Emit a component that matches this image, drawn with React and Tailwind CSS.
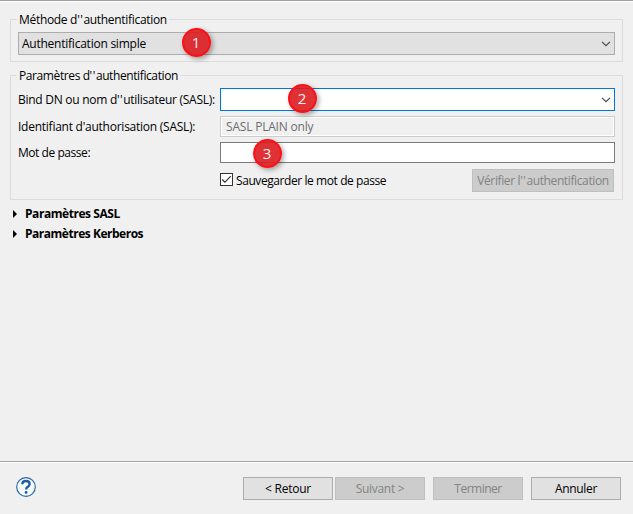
import React from 'react';

function Chevron() {
  return (
    <svg className="h-[6px] w-[10px]" viewBox="0 0 10 6" fill="none">
      <path d="M1 .9 5 4.7 9 .9" stroke="#4c4c4c" strokeWidth="1.25" />
    </svg>
  );
}

function Marker({ children, className }) {
  return (
    <span
      className={`absolute flex h-[29px] w-[29px] items-center justify-center rounded-full border-2 border-[#fb1015] bg-[#da1c21]/90 pb-px pr-px font-['Open_Sans',sans-serif] text-[15px] leading-none font-medium text-[#fdeeee] shadow-[2px_2px_5px_rgba(0,0,0,0.35)] ${className}`}
    >
      {children}
    </span>
  );
}

// Doubled apostrophe, kept visibly apart from each other.
function Quotes() {
  return <span className="tracking-[0.5px]">''</span>;
}

function Group({ title, titleClass, className, children }) {
  return (
    <section className={`relative border border-[#dcdcdc] ${className}`}>
      <h2 className={`absolute -top-[8px] left-[6px] bg-[#f0f0f0] px-[2px] leading-4 ${titleClass}`}>{title}</h2>
      {children}
    </section>
  );
}

function Button({ children, disabled, className }) {
  return (
    <button
      disabled={disabled}
      className={`flex h-[23px] shrink-0 items-center justify-center border ${
        disabled ? 'border-[#bfbfbf] bg-[#cccccc] text-[#838383]' : 'border-[#adadad] bg-[#e1e1e1] text-black'
      } ${className}`}
    >
      <span>{children}</span>
    </button>
  );
}

function Expander({ children, className }) {
  return (
    <div className="flex h-5 items-center">
      <svg className="mr-[8px] h-[8px] w-[4px]" viewBox="0 0 4 8">
        <path d="M0 0 4 4 0 8Z" fill="#000" />
      </svg>
      <span className={`font-bold ${className}`}>{children}</span>
    </div>
  );
}

export default function App() {
  return (
    <div className="flex h-[514px] w-[633px] flex-col overflow-hidden whitespace-nowrap bg-[#f0f0f0] font-['Open_Sans','Noto_Sans',sans-serif] text-[12px] leading-4 text-black">
      <div className="h-[2px] shrink-0 border-b border-t border-b-white border-t-[#a0a0a0]" />
      <main className="flex h-[459px] shrink-0 flex-col px-[10px] pt-[17px]">
        <Group title={<>Méthode d<Quotes />authentification</>} titleClass="tracking-[-0.31px]" className="h-[43px] px-[7px] pt-[12px]">
          <div className="relative flex h-[23px] items-center justify-between border border-[#adadad] bg-[#e1e1e1] pl-[3px] pr-[3px]">
            <span className="tracking-[-0.24px]">Authentification simple</span>
            <Chevron />
            <Marker className="left-[163px] top-[-5px]">1</Marker>
          </div>
        </Group>
        <Group title={<>Paramètres d<Quotes />authentification</>} titleClass="tracking-[-0.4px]" className="mt-[13px] h-[125px] px-[7px] pt-[12px]">
          <div className="flex h-[23px] items-center">
            <label className="w-[202px] shrink-0 tracking-[-0.27px]">Bind DN ou nom d<Quotes />utilisateur (SASL):</label>
            <div className="relative flex h-[23px] grow items-center justify-end border border-[#0078d7] bg-white pr-[3px]">
              <Chevron />
              <Marker className="left-[67px] top-[-5px]">2</Marker>
            </div>
          </div>
          <div className="mt-[5px] flex h-[21px] items-center">
            <label className="w-[202px] shrink-0 tracking-[-0.25px]">Identifiant d'authorisation (SASL):</label>
            <div className="flex h-[21px] grow items-center border border-[#cccccc] bg-[#f0f0f0] pl-[5px] text-[#6d6d6d] shadow-[inset_0_0_0_1px_white]">
              <span className="tracking-[-0.2px]">SASL PLAIN only</span>
            </div>
          </div>
          <div className="mt-[5px] flex h-[21px] items-center">
            <label className="w-[202px] shrink-0 tracking-[-0.45px]">Mot de passe:</label>
            <div className="relative h-[21px] grow border border-[#7a7a7a] bg-white">
              <Marker className="left-[32px] top-[-4px]">3</Marker>
            </div>
          </div>
          <div className="mt-[6px] flex h-[23px] items-center justify-between pl-[202px] pr-px">
            <label className="flex items-center">
              <span className="mr-[3px] -mt-[2px] flex h-[13px] w-[13px] items-center justify-center border border-[#333] bg-white">
                <svg className="h-[11px] w-[11px]" viewBox="0 0 11 11" fill="none">
                  <path d="m1.2 5.5 2.7 2.7 5.9-6" stroke="#333" strokeWidth="1.1" />
                </svg>
              </span>
              <span className="tracking-[-0.42px]">Sauvegarder le mot de passe</span>
            </label>
            <Button disabled className="w-[142px] tracking-[-0.38px]">Vérifier l<Quotes />authentification</Button>
          </div>
        </Group>
        <div className="mt-[4px] pl-[3px]">
          <Expander className="tracking-[-0.45px]">Paramètres SASL</Expander>
          <Expander className="tracking-[-0.48px]">Paramètres Kerberos</Expander>
        </div>
      </main>
      <footer className="flex h-[53px] shrink-0 items-start border-t border-[#a0a0a0] pl-[16px] pr-[12px] pt-[15px] shadow-[inset_0_1px_0_white]">
        <svg className="h-5 w-5" viewBox="0 0 20 20" fill="none">
          <circle cx="10" cy="10" r="9.3" fill="#f5fafe" stroke="#2a68a5" strokeWidth="1.2" />
          <path d="M6.3 7.2C6.3 4.8 7.8 4 10 4s3.6 1 3.6 3-1.3 2.5-2.4 3.3c-.8.6-1 1-1 2.2" stroke="#1e5b9b" strokeWidth="2.3" />
          <circle cx="10.1" cy="15.4" r="1.4" fill="#1e5b9b" />
        </svg>
        <div className="ml-auto flex">
          <Button className="w-[90px] tracking-[-0.25px]">&lt; Retour</Button>
          <Button disabled className="ml-[2px] w-[90px] tracking-[-0.3px]">Suivant &gt;</Button>
          <Button disabled className="ml-[8px] w-[90px] tracking-[-0.5px]">Terminer</Button>
          <Button className="ml-[8px] w-[90px] tracking-[-0.35px]">Annuler</Button>
        </div>
      </footer>
    </div>
  );
}
